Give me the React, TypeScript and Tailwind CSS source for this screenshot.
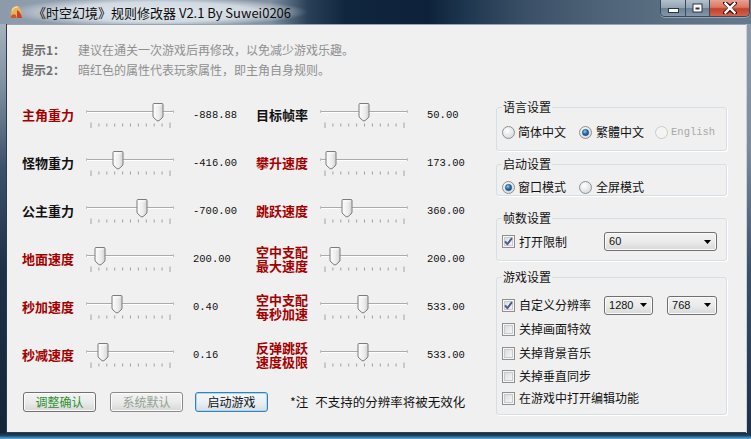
import React from "react";

const CJK = '"Noto Sans CJK SC", "Liberation Sans", sans-serif';

type Row = { label: string[]; red: boolean; pos: number; value: string };

const leftRows: Row[] = [
  { label: ["主角重力"], red: true, pos: 72, value: "-888.88" },
  { label: ["怪物重力"], red: false, pos: 32, value: "-416.00" },
  { label: ["公主重力"], red: false, pos: 56, value: "-700.00" },
  { label: ["地面速度"], red: true, pos: 14, value: "200.00" },
  { label: ["秒加速度"], red: true, pos: 31, value: "0.40" },
  { label: ["秒减速度"], red: true, pos: 17, value: "0.16" },
];

const midRows: Row[] = [
  { label: ["目标帧率"], red: false, pos: 44, value: "50.00" },
  { label: ["攀升速度"], red: true, pos: 11, value: "173.00" },
  { label: ["跳跃速度"], red: true, pos: 27, value: "360.00" },
  { label: ["空中支配", "最大速度"], red: true, pos: 15, value: "200.00" },
  { label: ["空中支配", "每秒加速"], red: true, pos: 43, value: "533.00" },
  { label: ["反弹跳跃", "速度极限"], red: true, pos: 43, value: "533.00" },
];

function Slider({ pos }: { pos: number }) {
  const ticks = Array.from({ length: 11 }, (_, i) => 5 + i * 7.9);
  const c = pos;
  const d = `M${c - 5} 3.5 Q${c - 5} 2.5 ${c - 4} 2.5 H${c + 4} Q${c + 5} 2.5 ${c + 5} 3.5 V15 Q${c + 5} 16 ${c + 4} 17 L${c + 1} 19.6 Q${c} 20.3 ${c - 1} 19.6 L${c - 4} 17 Q${c - 5} 16 ${c - 5} 15 Z`;
  return (
    <svg width="88" height="28" viewBox="0 0 88 28" className="block shrink-0">
      <defs>
        <linearGradient id="thumbGrad" x1="0" y1="0" x2="1" y2="0">
          <stop offset="0" stopColor="#fdfdfd" />
          <stop offset="0.6" stopColor="#ececec" />
          <stop offset="1" stopColor="#d2d2d2" />
        </linearGradient>
      </defs>
      <line x1="1" y1="10.5" x2="87" y2="10.5" stroke="#ababab" />
      <line x1="1" y1="11.5" x2="87" y2="11.5" stroke="#ffffff" />
      <line x1="0.5" y1="9" x2="0.5" y2="12" stroke="#c2c2c2" />
      <line x1="87.5" y1="9" x2="87.5" y2="12" stroke="#c2c2c2" />
      {ticks.map((x, i) => (
        <line
          key={i}
          x1={x}
          x2={x}
          y1={i === 0 || i === 10 ? 21.5 : 22.5}
          y2={i === 0 || i === 10 ? 27 : 25.5}
          stroke="#a2a2a2"
        />
      ))}
      <path d={d} fill="url(#thumbGrad)" stroke="#7b7b7b" />
      <path d={`M${c - 3.5} 4 H${c + 3.5}`} stroke="#ffffff" />
    </svg>
  );
}

function SliderRow({ row }: { row: Row }) {
  return (
    <div className="flex h-[48px] items-center">
      <div
        className={`w-[64px] shrink-0 text-[13px] font-bold leading-[14px] ${
          row.red ? "text-[#a30000]" : "text-[#111111]"
        }`}
      >
        {row.label.length === 1 ? (
          row.label[0]
        ) : (
          <>
            {row.label[0]}
            <br />
            {row.label[1]}
          </>
        )}
      </div>
      <Slider pos={row.pos} />
      <div
        className="ml-[19px] text-[10.5px] leading-none text-[#111111]"
        style={{ fontFamily: '"Liberation Mono", "DejaVu Sans Mono", monospace' }}
      >
        {row.value}
      </div>
    </div>
  );
}

function Radio({ checked, disabled }: { checked?: boolean; disabled?: boolean }) {
  return (
    <svg width="13" height="13" viewBox="0 0 13 13" className="block shrink-0">
      <defs>
        <radialGradient id="radioBg" cx="0.4" cy="0.35" r="0.7">
          <stop offset="0" stopColor="#ffffff" />
          <stop offset="1" stopColor="#d6d8da" />
        </radialGradient>
        <radialGradient id="radioDot" cx="0.4" cy="0.35" r="0.7">
          <stop offset="0" stopColor="#9ad0f0" />
          <stop offset="0.5" stopColor="#2c72b0" />
          <stop offset="1" stopColor="#153f72" />
        </radialGradient>
      </defs>
      <circle
        cx="6.5"
        cy="6.5"
        r="6"
        fill={disabled ? "#f4f4f4" : "url(#radioBg)"}
        stroke={disabled ? "#c9c9c9" : "#8d8f91"}
      />
      {checked && <circle cx="6.5" cy="6.5" r="3.2" fill="url(#radioDot)" stroke="#1e4a80" strokeWidth="0.5" />}
    </svg>
  );
}

function Check({ checked }: { checked?: boolean }) {
  return (
    <svg width="13" height="13" viewBox="0 0 13 13" className="block shrink-0">
      <defs>
        <linearGradient id="cbGrad" x1="0" y1="0" x2="1" y2="1">
          <stop offset="0" stopColor="#d9dcdf" />
          <stop offset="1" stopColor="#f7f7f7" />
        </linearGradient>
      </defs>
      <rect x="0.5" y="0.5" width="12" height="12" fill="#f6f6f6" stroke="#8e8f8f" />
      <rect x="2.5" y="2.5" width="8" height="8" fill="url(#cbGrad)" stroke="#c8cacc" />
      {checked && (
        <path d="M3 6.3 L5.4 9.2 L10 3.2" fill="none" stroke="#4a5a8c" strokeWidth="1.9" strokeLinejoin="round" />
      )}
    </svg>
  );
}

function Arrow() {
  return (
    <svg width="7" height="4" viewBox="0 0 7 4" className="block shrink-0">
      <path d="M0 0 H7 L3.5 4 Z" fill="#000000" />
    </svg>
  );
}

function Select({ value, className }: { value: string; className: string }) {
  return (
    <div
      className={`flex items-center justify-between rounded-[3px] border border-[#707070] bg-gradient-to-b from-[#f2f2f2] via-[#ebebeb] to-[#d8d8d8] pl-[4px] pr-[5px] text-[11px] leading-none text-[#111111] shadow-[inset_0_0_0_1px_#fbfbfb] ${className}`}
      style={{ fontFamily: '"Liberation Sans", "DejaVu Sans", sans-serif' }}
    >
      <span>{value}</span>
      <Arrow />
    </div>
  );
}

function Btn({ children, className }: { children: React.ReactNode; className: string }) {
  return (
    <div
      className={`flex h-[20px] w-[73px] shrink-0 items-center justify-center rounded-[3px] border text-[12px] leading-none ${className}`}
    >
      {children}
    </div>
  );
}

function Group({
  title,
  className,
  children,
}: {
  title: string;
  className: string;
  children: React.ReactNode;
}) {
  return (
    <fieldset
      className={`rounded-[3px] border border-[#d5dfe5] shadow-[1px_1px_0_#ffffff] ${className}`}
    >
      <legend className="ml-[5px] px-[1px] text-[12px] leading-[14px] text-[#111111]">{title}</legend>
      {children}
    </fieldset>
  );
}

export default function App() {
  return (
    <div
      className="flex h-[439px] w-[751px] flex-col overflow-hidden bg-[#1b3550]"
      style={{ fontFamily: CJK }}
    >
      {/* Title bar */}
      <div className="flex h-[24px] shrink-0 items-start bg-[linear-gradient(90deg,#8c9aa9_0%,#9aa7b4_20%,#7f8fa0_36%,#2a4058_41%,#10263e_46%,#0d223a_57%,#1f3650_62%,#3a5066_70%,#4f6378_80%,#5d7185_90%,#67798b_100%)]">
        <div className="flex h-[24px] w-[320px] items-center pl-[8px] bg-[radial-gradient(ellipse_150px_15px_at_158px_12px,rgba(228,234,240,0.97)_0%,rgba(220,227,234,0.85)_65%,rgba(210,218,226,0)_100%)]">
          <svg width="16" height="16" viewBox="0 0 16 16" className="block shrink-0">
            <path d="M3 12 Q2 6 6 3 Q10 1 12 4 Q14 8 13 12 Z" fill="#e8b060" />
            <path d="M4 5 Q7 1 11 3 Q9 4 7 4 Q5 5 4 8 Z" fill="#f4e0a0" />
            <path d="M9 6 Q13 8 14 14 L9 14 Z" fill="#d2401e" />
            <path d="M3 12 Q5 9 8 11 L8 14 L3 14 Z" fill="#c85a2a" />
          </svg>
          <span className="ml-[9px] text-[13px] leading-none text-[#0a0a0a]">
            《时空幻境》规则修改器 V2.1 By Suwei0206
          </span>
        </div>
        <div className="ml-auto mr-[1px] flex h-[17px] overflow-hidden rounded-b-[5px] border border-t-0 border-[#3b4a5a] shadow-[0_1px_0_rgba(255,255,255,0.35)]">
          <div className="flex w-[25px] items-center justify-center border-r border-[#3b4a5a] bg-[linear-gradient(180deg,#b3c0cc_0%,#92a3b3_48%,#6d8196_52%,#8497aa_100%)]">
            <svg width="11" height="5" viewBox="0 0 11 5" className="mt-[5px] block">
              <rect x="0.5" y="0.5" width="10" height="4" fill="#ffffff" stroke="#2a3540" />
            </svg>
          </div>
          <div className="flex w-[24px] items-center justify-center border-r border-[#3b4a5a] bg-[linear-gradient(180deg,#b3c0cc_0%,#92a3b3_48%,#6d8196_52%,#8497aa_100%)]">
            <svg width="11" height="10" viewBox="0 0 11 10" className="block">
              <rect x="0.5" y="0.5" width="10" height="9" fill="#2a3540" />
              <rect x="1.5" y="1.5" width="8" height="7" fill="#ffffff" />
              <rect x="3.5" y="4.5" width="4" height="2" fill="#2a3540" />
            </svg>
          </div>
          <div className="flex w-[39px] items-center justify-center bg-[linear-gradient(180deg,#e6a293_0%,#d97962_45%,#c4412a_55%,#d2634a_100%)]">
            <svg width="14" height="12" viewBox="0 0 14 12" className="block">
              <path d="M2 1 L7 5 L12 1 M2 11 L7 7 L12 11 M7 5 L7 7" stroke="#3a1a14" strokeWidth="4.2" strokeLinecap="square" fill="none" />
              <path d="M2.5 1.5 L11.5 10.5 M11.5 1.5 L2.5 10.5" stroke="#ffffff" strokeWidth="2.4" strokeLinecap="square" fill="none" />
            </svg>
          </div>
        </div>
      </div>

      {/* Middle row: frames + client */}
      <div className="flex h-[409px] shrink-0">
        <div className="w-[7px] shrink-0 bg-[linear-gradient(180deg,#a5b2be_0%,#7f90a1_15%,#3b516a_35%,#1c3148_60%,#132739_100%)] shadow-[inset_-1px_0_0_#2a3a4a]" />
        <div className="flex flex-1 flex-col border-t border-b border-[#96a4b2] border-b-[#33414e] bg-[#f0f0f0] pl-[15px]">
          {/* Tips */}
          <div className="pt-[15px] text-[12px] leading-[20px]">
            <div className="flex">
              <span className="w-[56px] font-bold text-[#6f6f6f]">提示1：</span>
              <span className="text-[#8f8f8f]">建议在通关一次游戏后再修改，以免减少游戏乐趣。</span>
            </div>
            <div className="flex">
              <span className="w-[56px] font-bold text-[#6f6f6f]">提示2：</span>
              <span className="text-[#8f8f8f]">暗红色的属性代表玩家属性，即主角自身规则。</span>
            </div>
          </div>

          {/* Main */}
          <div className="mt-[11px] flex">
            <div className="flex w-[468px] shrink-0 flex-col">
              <div className="grid grid-flow-col grid-rows-6 grid-cols-[234px_234px]">
                {leftRows.map((r, i) => (
                  <SliderRow key={"l" + i} row={r} />
                ))}
                {midRows.map((r, i) => (
                  <SliderRow key={"m" + i} row={r} />
                ))}
              </div>
              <div className="ml-[1px] mt-[13px] flex items-center">
                <Btn className="border-[#707070] bg-gradient-to-b from-[#f3f3f3] via-[#ebebeb] to-[#d7d7d7] text-[#2f8f2f] shadow-[inset_0_0_0_1px_#fcfcfc]">
                  调整确认
                </Btn>
                <Btn className="ml-[14px] border-[#8a8a8a] bg-gradient-to-b from-[#f3f3f3] via-[#ebebeb] to-[#d7d7d7] text-[#93a393] shadow-[inset_0_0_0_1px_#fcfcfc]">
                  系统默认
                </Btn>
                <Btn className="ml-[12px] border-[#3c7fb1] bg-gradient-to-b from-[#f2f7fb] via-[#eaf0f5] to-[#d6dfe7] text-[#111111] shadow-[inset_0_0_0_1px_#a9d8f3]">
                  启动游戏
                </Btn>
                <div className="ml-[22px] text-[12.5px] leading-none text-[#111111]">
                  *注<span className="ml-[7px]">不支持的分辨率将被无效化</span>
                </div>
              </div>
            </div>

            {/* Right panel */}
            <div className="ml-[6px] mt-[9px] flex w-[231px] shrink-0 flex-col text-[12px] text-[#111111]">
              <Group title="语言设置" className="">
                <div className="flex h-[36px] items-center pl-[5px] leading-none">
                  <Radio />
                  <span className="ml-[3px]">简体中文</span>
                  <span className="ml-[13px]">
                    <Radio checked />
                  </span>
                  <span className="ml-[4px]">繁體中文</span>
                  <span className="ml-[11px]">
                    <Radio disabled />
                  </span>
                  <span
                    className="ml-[3px] text-[10.5px] text-[#a9a9a9]"
                    style={{ fontFamily: '"Liberation Mono", monospace' }}
                  >
                    English
                  </span>
                </div>
              </Group>
              <Group title="启动设置" className="mt-[6px]">
                <div className="flex h-[16px] mt-[8px] items-center pl-[5px] leading-none">
                  <Radio checked />
                  <span className="ml-[3px]">窗口模式</span>
                  <span className="ml-[13px]">
                    <Radio />
                  </span>
                  <span className="ml-[4px]">全屏模式</span>
                </div>
              </Group>
              <Group title="帧数设置" className="mt-[15px]">
                <div className="mb-[9px] mt-[7px] flex h-[19px] items-center pl-[5px] leading-none">
                  <Check checked />
                  <span className="ml-[4px]">打开限制</span>
                  <Select value="60" className="ml-[37px] h-[19px] w-[113px]" />
                </div>
              </Group>
              <Group title="游戏设置" className="mt-[9px]">
                <div className="flex flex-col pb-[5px] pl-[5px] leading-none">
                  <div className="mt-[12px] flex h-[18px] items-center">
                    <Check checked />
                    <span className="ml-[4px]">自定义分辨率</span>
                    <Select value="1280" className="ml-[13px] h-[19px] w-[49px]" />
                    <Select value="768" className="ml-[14px] h-[19px] w-[50px]" />
                  </div>
                  <div className="mt-[3px] flex h-[24px] items-center">
                    <Check />
                    <span className="ml-[4px]">关掉画面特效</span>
                  </div>
                  <div className="flex h-[24px] items-center">
                    <Check />
                    <span className="ml-[4px]">关掉背景音乐</span>
                  </div>
                  <div className="flex h-[22px] items-center">
                    <Check />
                    <span className="ml-[4px]">关掉垂直同步</span>
                  </div>
                  <div className="flex h-[22px] items-center">
                    <Check />
                    <span className="ml-[4px]">在游戏中打开编辑功能</span>
                  </div>
                </div>
              </Group>
            </div>
          </div>
        </div>
        <div className="w-[5px] shrink-0 bg-[linear-gradient(180deg,#8d9cab_0%,#7a8b9c_30%,#3b516a_60%,#1c3148_100%)] shadow-[inset_1px_0_0_#c9d2da]" />
      </div>

      {/* Bottom frame */}
      <div className="h-[6px] shrink-0 bg-[linear-gradient(180deg,#1a2a3a_0%,#1f4563_45%,#3d8fc4_80%,#5cb2e4_100%)]" />
    </div>
  );
}
